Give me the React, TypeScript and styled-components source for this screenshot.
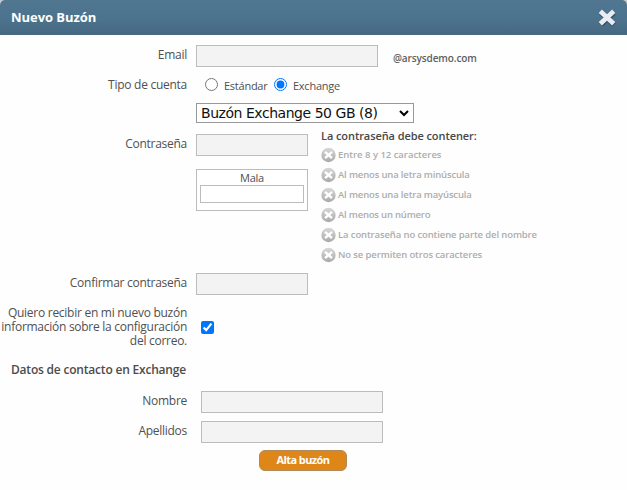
import React from 'react';
import styled, { createGlobalStyle } from 'styled-components';

const GlobalStyle = createGlobalStyle`
  * { box-sizing: border-box; }
  body { margin: 0; background: #fefefe; font-family: "Trebuchet MS", "Open Sans", sans-serif; }
`;

const Dialog = styled.form`
  width: 627px;
  height: 490px;
  overflow: hidden;
  background: #fefefe;
  color: #505050;
  font-size: 12px;
  line-height: 14px;
  letter-spacing: -0.27px;
`;

const Header = styled.header`
  display: flex;
  align-items: center;
  justify-content: space-between;
  height: 35px;
  padding: 0 11px 0 11px;
  border-radius: 5px 5px 0 0;
  background: linear-gradient(#507690, #4d748f 45%, #466981);
  box-shadow: 0 0 0 6px #c3ccd2;
  clip-path: inset(0);
`;

const Title = styled.h1`
  margin: 0;
  padding-bottom: 1px;
  color: #fff;
  font-size: 13px;
  line-height: 18px;
  font-weight: 700;
  letter-spacing: -0.05px;
`;

const CloseButton = styled.button`
  display: flex;
  width: 18px;
  height: 18px;
  padding: 0;
  border: 0;
  background: none;
`;

const Body = styled.div`
  display: flex;
  flex-direction: column;
  padding-top: 10px;
`;

const Row = styled.div<{ $gap?: number; $height?: number }>`
  display: grid;
  grid-template-columns: 187px 1fr;
  column-gap: 9px;
  height: ${p => p.$height ?? 22}px;
  margin-bottom: ${p => p.$gap ?? 8}px;
`;

const Label = styled.label<{ $top?: number }>`
  padding-top: ${p => p.$top ?? 3}px;
  text-align: right;
  white-space: pre-line;
`;

const Field = styled.div<{ $indent?: number }>`
  display: flex;
  align-items: center;
  padding-left: ${p => p.$indent ?? 0}px;
`;

const Input = styled.input<{ $width: number }>`
  width: ${p => p.$width}px;
  height: 22px;
  padding: 2px 4px;
  border: 1px solid #bcbcbc;
  border-radius: 0;
  background: #f3f3f3;
  outline: 0;
`;

const Domain = styled.span`
  margin: 4px 0 0 15px;
  color: #606060;
  font-size: 10px;
  font-weight: 600;
  letter-spacing: -0.1px;
`;

const Radio = styled.input`
  width: 13px;
  height: 13px;
  margin: 0;
`;

const Option = styled.label<{ $width: number }>`
  display: flex;
  align-items: center;
  gap: 6px;
  width: ${p => p.$width}px;
  margin-top: -1px;
  font-size: 11px;
  letter-spacing: -0.25px;

  span { padding-top: 3px; }
`;

const Select = styled.div`
  display: flex;
  align-items: center;
  justify-content: space-between;
  width: 218px;
  height: 20px;
  padding: 0 4px;
  border: 1px solid #999;
  background: #fff;
  color: #111;
  font: 14px/18px Verdana, "DejaVu Sans", sans-serif;
  letter-spacing: -0.46px;
  white-space: nowrap;
`;

const PasswordSection = styled.div`
  display: grid;
  grid-template-columns: 187px 112px 1fr;
  column-gap: 9px;
  height: 143px;
  margin-top: 1px;
`;

const PasswordColumn = styled.div`
  display: flex;
  flex-direction: column;
  gap: 13px;
  padding-top: 4px;
`;

const Strength = styled.div`
  display: flex;
  flex-direction: column;
  align-items: center;
  height: 42px;
  padding-top: 1px;
  border: 1px solid #bcbcbc;
  background: #fff;
  font-size: 11px;
  line-height: 14px;
`;

const Meter = styled.div`
  width: 104px;
  height: 18px;
  border: 1px solid #bcbcbc;
`;

const Rules = styled.section`
  padding-left: 4px;
`;

const RulesTitle = styled.h2`
  margin: -1px 0 0;
  padding-bottom: 2px;
  color: #484848;
  font-size: 11px;
  line-height: 14px;
  font-weight: 600;
  letter-spacing: -0.08px;
`;

const Rule = styled.div<{ $spacing: number }>`
  display: flex;
  align-items: center;
  gap: 2px;
  height: 20px;
  color: #adadad;
  font-size: 9.5px;
  font-weight: 600;
  letter-spacing: ${p => p.$spacing}px;
  white-space: nowrap;
`;

const RuleText = styled.span`
  padding-bottom: 1px;
`;

const Checkbox = styled.input`
  width: 13px;
  height: 13px;
  margin: 1px 0 0;
`;

const SectionTitle = styled.h2`
  margin: 0 0 14px 11px;
  color: #4c4c4c;
  font-size: 12px;
  line-height: 14px;
  font-weight: 600;
  letter-spacing: -0.2px;
`;

const Submit = styled.button`
  align-self: flex-start;
  width: 88px;
  height: 21px;
  margin: -1px 0 0 259px;
  padding: 0 0 1px;
  border: 1px solid #ae8a5c;
  border-radius: 6px;
  background: #df8619;
  color: #fff;
  font: 700 11px/18px "Trebuchet MS", "Open Sans", sans-serif;
  letter-spacing: -0.6px;
`;

const RULES: [string, number][] = [
  ['Entre 8 y 12 caracteres', -0.02],
  ['Al menos una letra minúscula', -0.16],
  ['Al menos una letra mayúscula', -0.16],
  ['Al menos un número', -0.2],
  ['La contraseña no contiene parte del nombre', -0.12],
  ['No se permiten otros caracteres', -0.12],
];

function CloseIcon() {
  return (
    <svg width="18" height="18" viewBox="0 0 18 18">
      <path d="M3 4 16 16M16 4 3 16" stroke="#345369" strokeWidth="5" />
      <path d="M2.3 2.3 15.7 14.7M15.7 2.3 2.3 14.7" stroke="#e9edf2" strokeWidth="4.6" />
    </svg>
  );
}

function RuleIcon() {
  return (
    <svg width="15" height="16" viewBox="0 0 15 16">
      <defs>
        <linearGradient id="disc" x1="0" y1="0" x2="0" y2="1">
          <stop offset="0" stopColor="#d8d8d8" />
          <stop offset="1" stopColor="#a9a9a9" />
        </linearGradient>
      </defs>
      <circle cx="7.5" cy="8" r="7.2" fill="url(#disc)" />
      <path d="m4 4.8 7 6.4m0-6.4-7 6.4" stroke="#fff" strokeWidth="2.5" />
    </svg>
  );
}

export default function App() {
  return (
    <>
      <GlobalStyle />
      <Dialog>
        <Header>
          <Title>Nuevo Buzón</Title>
          <CloseButton type="button" aria-label="Cerrar"><CloseIcon /></CloseButton>
        </Header>
        <Body>
          <Row>
            <Label>Email</Label>
            <Field><Input $width={182} /><Domain>@arsysdemo.com</Domain></Field>
          </Row>
          <Row $height={20}>
            <Label>Tipo de cuenta</Label>
            <Field $indent={9}>
              <Option $width={69}><Radio type="radio" name="type" /><span>Estándar</span></Option>
              <Option $width={80}><Radio type="radio" name="type" defaultChecked /><span>Exchange</span></Option>
            </Field>
          </Row>
          <Row $height={20} $gap={6}>
            <span />
            <Field>
              <Select>
                Buzón Exchange 50 GB (8)
                <svg width="10" height="8" viewBox="0 0 10 8"><path d="m1 2 4 4 4-4" fill="none" stroke="#000" strokeWidth="2" /></svg>
              </Select>
            </Field>
          </Row>
          <PasswordSection>
            <Label $top={7}>Contraseña</Label>
            <PasswordColumn>
              <Input $width={112} type="password" />
              <Strength>Mala<Meter /></Strength>
            </PasswordColumn>
            <Rules>
              <RulesTitle>La contraseña debe contener:</RulesTitle>
              {RULES.map(([text, spacing]) => (
                <Rule key={text} $spacing={spacing}><RuleIcon /><RuleText>{text}</RuleText></Rule>
              ))}
            </Rules>
          </PasswordSection>
          <Row $gap={11}>
            <Label>Confirmar contraseña</Label>
            <Field><Input $width={112} type="password" /></Field>
          </Row>
          <Row $height={42} $gap={15}>
            <Label $top={0}>{'Quiero recibir en mi nuevo buzón\ninformación sobre la configuración\ndel correo.'}</Label>
            <Field $indent={5}><Checkbox type="checkbox" defaultChecked /></Field>
          </Row>
          <SectionTitle>Datos de contacto en Exchange</SectionTitle>
          <Row>
            <Label>Nombre</Label>
            <Field $indent={5}><Input $width={182} /></Field>
          </Row>
          <Row>
            <Label>Apellidos</Label>
            <Field $indent={5}><Input $width={182} /></Field>
          </Row>
          <Submit type="button">Alta buzón</Submit>
        </Body>
      </Dialog>
    </>
  );
}
